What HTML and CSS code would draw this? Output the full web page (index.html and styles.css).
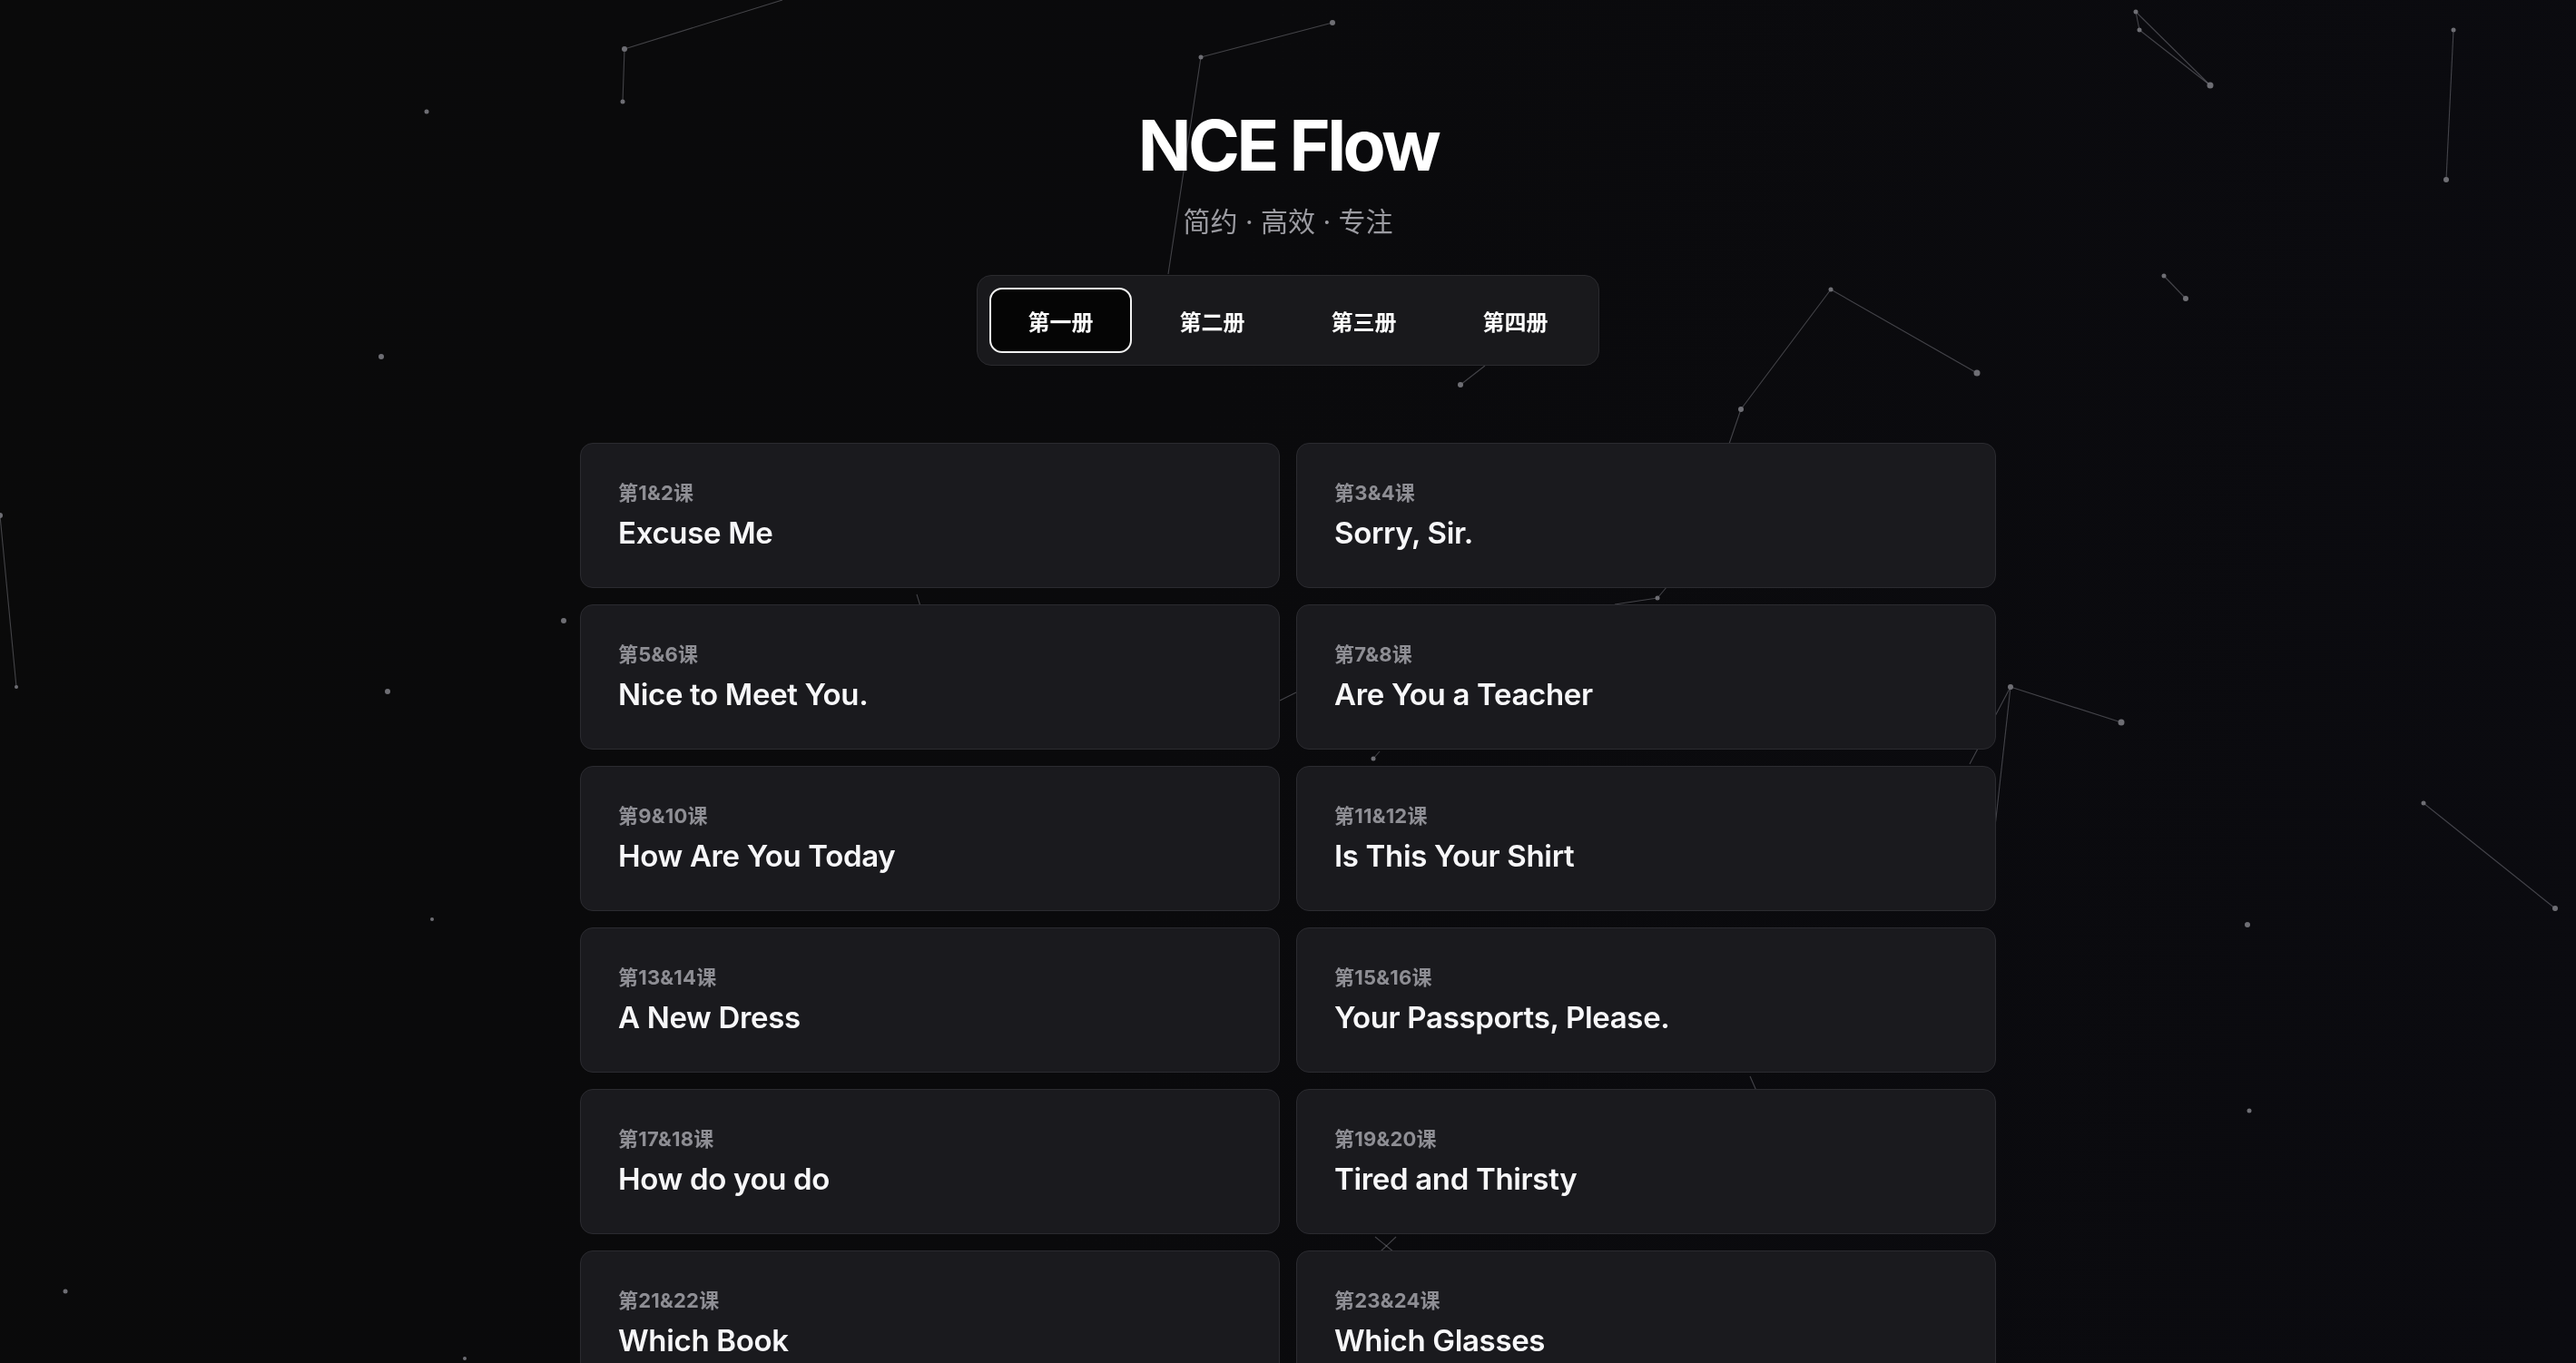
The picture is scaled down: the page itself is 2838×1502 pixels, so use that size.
FILE: index.html
```html
<!DOCTYPE html>
<html lang="zh-CN">
<head>
<meta charset="utf-8">
<title>NCE Flow</title>
<link rel="stylesheet" href="styles.css">
</head>
<body>
<svg class="sky" viewBox="0 0 2838 1502" preserveAspectRatio="none" aria-hidden="true">
  <g class="links">
    <line x1="688" y1="54" x2="862" y2="0"/>
    <line x1="688" y1="54" x2="686" y2="112"/>
    <line x1="1468" y1="25" x2="1323" y2="63"/>
    <line x1="1323" y1="63" x2="1287" y2="302"/>
    <line x1="2353" y1="13" x2="2357" y2="33"/>
    <line x1="2353" y1="13" x2="2435" y2="94"/>
    <line x1="2357" y1="33" x2="2435" y2="94"/>
    <line x1="2703" y1="33" x2="2695" y2="198"/>
    <line x1="2384" y1="304" x2="2408" y2="329"/>
    <line x1="2017" y1="319" x2="2178" y2="411"/>
    <line x1="2017" y1="319" x2="1918" y2="451"/>
    <line x1="1918" y1="451" x2="1904" y2="492"/>
    <line x1="1636" y1="403" x2="1609" y2="424"/>
    <line x1="0" y1="568" x2="18" y2="757"/>
    <line x1="2215" y1="757" x2="2337" y2="796"/>
    <line x1="2215" y1="757" x2="2170" y2="842"/>
    <line x1="2215" y1="757" x2="2197" y2="920"/>
    <line x1="2670" y1="885" x2="2815" y2="1001"/>
    <line x1="1826" y1="659" x2="1837" y2="646"/>
    <line x1="1779" y1="666" x2="1826" y2="659"/>
    <line x1="1010" y1="655" x2="1014" y2="668"/>
    <line x1="1410" y1="772" x2="1428" y2="763"/>
    <line x1="1513" y1="836" x2="1520" y2="828"/>
    <line x1="1928" y1="1186" x2="1935" y2="1202"/>
    <line x1="1538" y1="1363" x2="1520" y2="1380"/>
    <line x1="1515" y1="1363" x2="1536" y2="1380"/>
  </g>
  <g class="stars">
    <circle cx="688" cy="54" r="3"/>
    <circle cx="686" cy="112" r="2.5"/>
    <circle cx="1468" cy="25" r="3"/>
    <circle cx="1323" cy="63" r="2.5"/>
    <circle cx="470" cy="123" r="2.5"/>
    <circle cx="420" cy="393" r="3"/>
    <circle cx="2353" cy="13" r="2.5"/>
    <circle cx="2357" cy="33" r="2.5"/>
    <circle cx="2435" cy="94" r="3.5"/>
    <circle cx="2703" cy="33" r="2.5"/>
    <circle cx="2695" cy="198" r="3"/>
    <circle cx="2384" cy="304" r="2.5"/>
    <circle cx="2408" cy="329" r="3"/>
    <circle cx="2017" cy="319" r="2.5"/>
    <circle cx="2178" cy="411" r="3.5"/>
    <circle cx="1918" cy="451" r="3"/>
    <circle cx="1609" cy="424" r="3"/>
    <circle cx="0" cy="568" r="3"/>
    <circle cx="18" cy="757" r="2"/>
    <circle cx="621" cy="684" r="3"/>
    <circle cx="427" cy="762" r="3"/>
    <circle cx="476" cy="1013" r="2"/>
    <circle cx="2215" cy="757" r="3"/>
    <circle cx="2337" cy="796" r="3.5"/>
    <circle cx="2670" cy="885" r="2.5"/>
    <circle cx="2815" cy="1001" r="3"/>
    <circle cx="2476" cy="1019" r="3"/>
    <circle cx="2478" cy="1224" r="2.5"/>
    <circle cx="72" cy="1423" r="2.5"/>
    <circle cx="512" cy="1497" r="2"/>
    <circle cx="1826" cy="659" r="2.5"/>
    <circle cx="1513" cy="836" r="2.5"/>
  </g>
</svg>

<main class="page">
  <header class="hero">
    <h1 class="title">NCE Flow</h1>
    <p class="subtitle">简约 · 高效 · 专注</p>
  </header>

  <nav class="tabs">
    <button class="tab active">第一册</button>
    <button class="tab">第二册</button>
    <button class="tab">第三册</button>
    <button class="tab">第四册</button>
  </nav>

  <section class="lessons">
    <a class="card" href="#"><span class="label">第1&amp;2课</span><span class="name">Excuse Me</span></a>
    <a class="card" href="#"><span class="label">第3&amp;4课</span><span class="name">Sorry, Sir.</span></a>
    <a class="card" href="#"><span class="label">第5&amp;6课</span><span class="name">Nice to Meet You.</span></a>
    <a class="card" href="#"><span class="label">第7&amp;8课</span><span class="name">Are You a Teacher</span></a>
    <a class="card" href="#"><span class="label">第9&amp;10课</span><span class="name">How Are You Today</span></a>
    <a class="card" href="#"><span class="label">第11&amp;12课</span><span class="name">Is This Your Shirt</span></a>
    <a class="card" href="#"><span class="label">第13&amp;14课</span><span class="name">A New Dress</span></a>
    <a class="card" href="#"><span class="label">第15&amp;16课</span><span class="name">Your Passports, Please.</span></a>
    <a class="card" href="#"><span class="label">第17&amp;18课</span><span class="name">How do you do</span></a>
    <a class="card" href="#"><span class="label">第19&amp;20课</span><span class="name">Tired and Thirsty</span></a>
    <a class="card" href="#"><span class="label">第21&amp;22课</span><span class="name">Which Book</span></a>
    <a class="card" href="#"><span class="label">第23&amp;24课</span><span class="name">Which Glasses</span></a>
  </section>
</main>
</body>
</html>
```

FILE: styles.css
```css
* { box-sizing: border-box; }

html, body {
  margin: 0;
  padding: 0;
}

body {
  background: linear-gradient(100deg, #0a0a0a 0%, #0a0a0c 45%, #0b0b10 100%);
  background-attachment: fixed;
  color: #f5f5f7;
  font-family: Inter, "Noto Sans CJK SC", "Noto Sans", sans-serif;
  min-height: 100vh;
}

.sky {
  position: fixed;
  left: 0;
  top: 0;
  width: 100vw;
  height: 100vh;
  z-index: 0;
  pointer-events: none;
}

.sky .links line {
  stroke: rgba(190, 190, 200, 0.32);
  stroke-width: 1.1;
}

.sky .stars circle {
  fill: #6e6e74;
}

.page {
  position: relative;
  z-index: 1;
  display: flex;
  flex-direction: column;
  align-items: center;
  padding: 113px 0 80px;
}

.hero {
  display: flex;
  flex-direction: column;
  align-items: center;
}

.title {
  margin: 0;
  font-size: 77px;
  line-height: 94px;
  font-weight: 700;
  letter-spacing: -0.045em;
  color: #ffffff;
}

.subtitle {
  margin: 17px 0 0;
  font-size: 30px;
  line-height: 40px;
  color: #9b9ba1;
  font-weight: 400;
}

.tabs {
  margin-top: 39px;
  display: flex;
  gap: 10px;
  padding: 13px;
  background: #19191c;
  border: 1px solid #2a2a2e;
  border-radius: 16px;
}

.tab {
  width: 157px;
  height: 72px;
  border: 2px solid transparent;
  border-radius: 14px;
  background: transparent;
  color: #ffffff;
  font-family: Inter, "Noto Sans CJK SC", sans-serif;
  font-size: 24px;
  font-weight: 700;
  cursor: pointer;
}

.tab.active {
  background: #050505;
  border-color: #f2f2f2;
}

.lessons {
  margin-top: 85px;
  width: 1560px;
  display: grid;
  grid-template-columns: 1fr 1fr;
  gap: 18px;
}

.card {
  display: flex;
  flex-direction: column;
  gap: 9px;
  padding: 39px 41px 40px;
  background: #1a1a1e;
  border: 1px solid #2b2b30;
  border-radius: 14px;
  text-decoration: none;
  color: inherit;
}

.label {
  font-size: 22px;
  line-height: 30px;
  font-weight: 700;
  color: #8e8e94;
  letter-spacing: 0.01em;
}

.name {
  font-size: 33px;
  line-height: 40px;
  font-weight: 600;
  color: #f7f7f9;
  letter-spacing: -0.01em;
}
```
